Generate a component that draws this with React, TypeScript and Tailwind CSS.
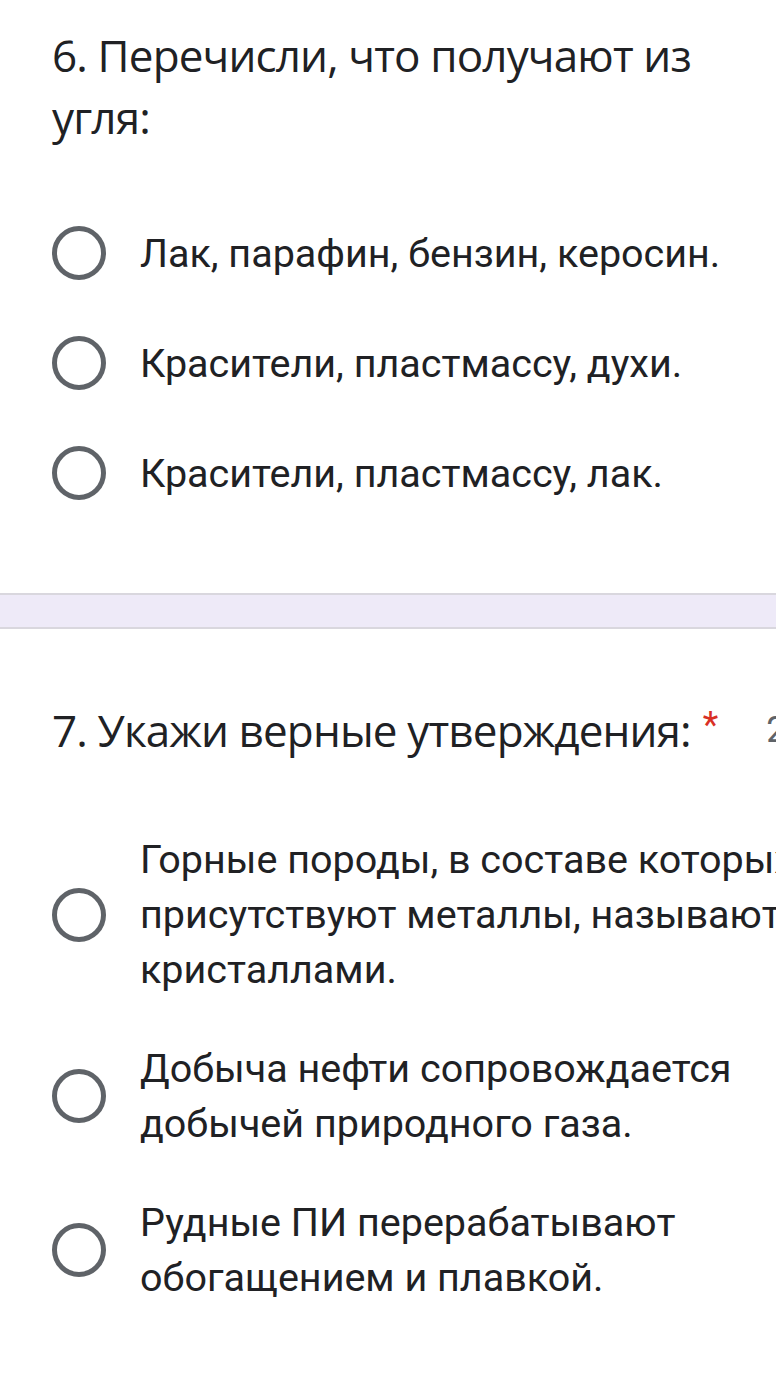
import React from "react"

interface OptionProps {
    lines: string[]
}

const Radio = () => (
    <div className="h-[54px] w-[54px] shrink-0 rounded-full border-[5px] border-[#5f6368]"></div>
)

const SingleOption = ({ lines }: OptionProps) => (
    <div className="flex h-[110px] items-center">
        <div className="flex w-[140px] shrink-0 pl-[52px]">
            <Radio />
        </div>
        <p className="whitespace-nowrap text-[39.5px] leading-[55px] text-[#202124]">{lines[0]}</p>
    </div>
)

const MultiOption = ({ lines }: OptionProps) => (
    <div className="flex items-center py-[22px]">
        <div className="flex w-[140px] shrink-0 pl-[52px]">
            <Radio />
        </div>
        <p className="whitespace-nowrap text-[39.5px] leading-[55px] text-[#202124]">
            {lines.map((l, i) => (
                <span key={i} className="block">{l}</span>
            ))}
        </p>
    </div>
)

const App = () => {
    const q6 = [
        "Лак, парафин, бензин, керосин.",
        "Красители, пластмассу, духи.",
        "Красители, пластмассу, лак.",
    ]
    const q7 = [
        ["Горные породы, в составе которых", "присутствуют металлы, называют", "кристаллами."],
        ["Добыча нефти сопровождается", "добычей природного газа."],
        ["Рудные ПИ перерабатывают", "обогащением и плавкой."],
    ]
    return (
        <div className="h-[1374px] w-[776px] overflow-hidden bg-white font-['Roboto',sans-serif]">
            <section className="pt-[24px]">
                <h2 className="pl-[52px] font-['Open_Sans',sans-serif] text-[44px] leading-[62px] tracking-[-0.85px] text-[#202124]">
                    6. Перечисли, что получают из
                    <br />
                    угля:
                </h2>
                <div className="mt-[50px]">
                    {q6.map((t) => (
                        <SingleOption key={t} lines={[t]} />
                    ))}
                </div>
            </section>
            <div className="mt-[65px] h-[36px] border-y-2 border-[#d9d7de] bg-[#eeeaf8]"></div>
            <section className="pt-[70px]">
                <div className="flex items-start whitespace-nowrap pl-[52px]">
                    <h2 className="font-['Open_Sans',sans-serif] text-[44px] leading-[62px] tracking-[-0.85px] text-[#202124]">
                        7. Укажи верные утверждения:
                    </h2>
                    <span className="ml-[12px] mt-[6px] text-[36px] leading-[40px] text-[#d93025]">*</span>
                    <span className="ml-[48px] text-[36px] leading-[62px] text-[#5f6368]">2 балла</span>
                </div>
                <div className="mt-[49px]">
                    {q7.map((l) => (
                        <MultiOption key={l[0]} lines={l} />
                    ))}
                </div>
            </section>
        </div>
    )
}

export default App
